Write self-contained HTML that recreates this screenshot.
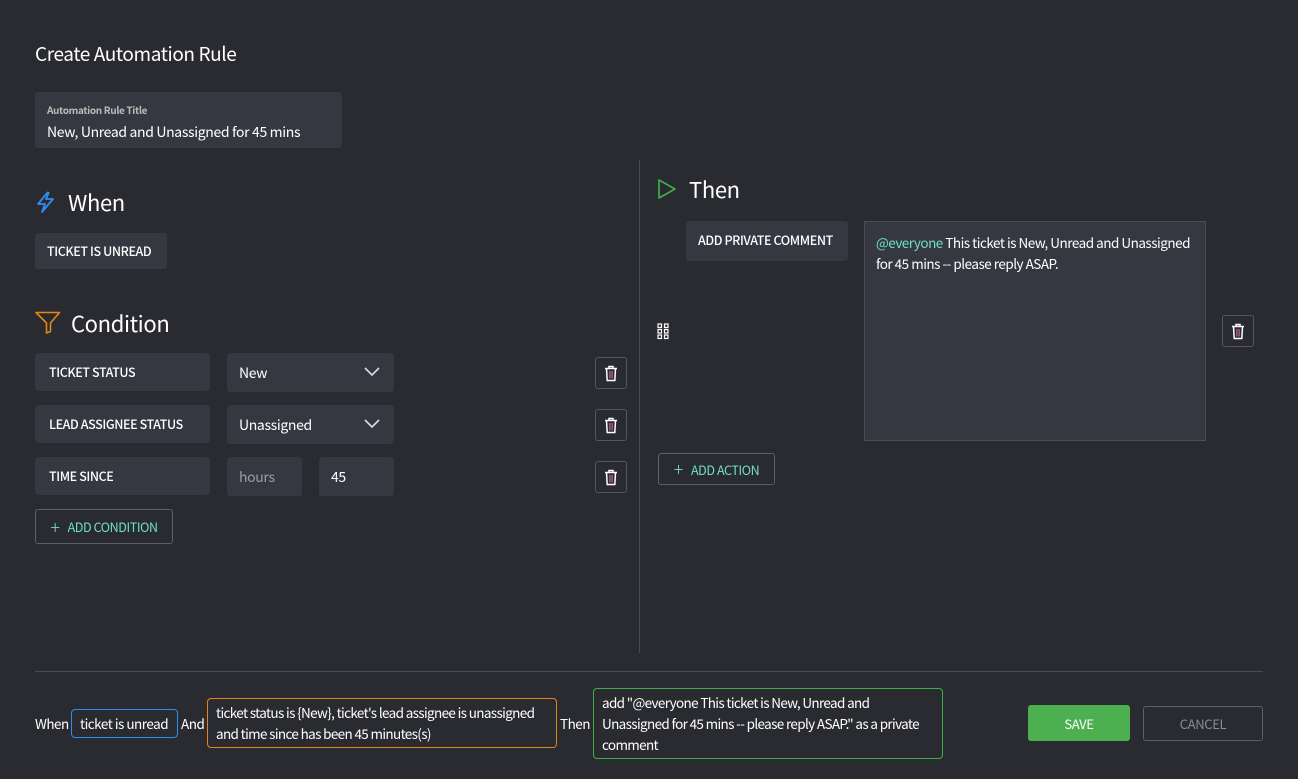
<!DOCTYPE html>
<html><head><meta charset="utf-8"><style>
*{box-sizing:border-box;margin:0;padding:0}
body{width:1298px;height:779px;background:#2a2b30;color:#fff;font-family:"Noto Sans CJK JP","Liberation Sans",sans-serif;position:relative;overflow:hidden;font-size:14px;letter-spacing:-0.35px}
.a{position:absolute}
.box{position:absolute;background:#363841;border-radius:3px}
.lbl{font-size:12.5px;font-weight:500;padding-left:14px;line-height:38px;letter-spacing:-0.4px}
.trash{position:absolute;width:32px;height:32px;border:1px solid #55575e;border-radius:3px;display:flex;align-items:center;justify-content:center}
.btn{position:absolute;border:1px solid #5d5f66;border-radius:3px;color:#6fe0c0;font-size:12.5px;display:flex;align-items:center;justify-content:center;gap:8px;letter-spacing:-0.4px}
.chev{position:absolute;right:14px;top:14px}
.pill{position:absolute;border-radius:4px;font-size:13.5px;line-height:21px;padding:0 8px;display:flex;align-items:center;letter-spacing:-0.5px}
</style></head><body>
<div class="a" style="left:35px;top:40px;font-size:19px;letter-spacing:-0.4px">Create Automation Rule</div>
<div class="box" style="left:35px;top:92px;width:307px;height:56px">
<div class="a" style="left:12px;top:10px;font-size:10px;color:#bbb;font-weight:600">Automation Rule Title</div>
<div class="a" style="left:12px;top:30px;font-size:14px">New, Unread and Unassigned for 45 mins</div></div>

<svg class="a" style="left:35px;top:190px" width="22" height="24" viewBox="0 0 22 24"><path d="M13 2 L3 14 H10 L7 22 L18 9 H11 L14 2" fill="none" stroke="#2f8cf0" stroke-width="1.8" stroke-linejoin="round"/></svg>
<div class="a" style="left:68px;top:186px;font-size:22px">When</div>
<div class="box" style="left:35px;top:233px;width:132px;height:36px"><div class="lbl" style="padding-left:12px;line-height:36px">TICKET IS UNREAD</div></div>

<svg class="a" style="left:35px;top:311px" width="26" height="23" viewBox="0 0 26 23"><path d="M1 1.5 H24.5 L15.5 12 V20.5 L11.5 22 V12 Z" fill="none" stroke="#e38612" stroke-width="1.6" stroke-linejoin="round"/></svg>
<div class="a" style="left:71px;top:307px;font-size:22px">Condition</div>

<div class="box" style="left:35px;top:353px;width:175px;height:38px"><div class="lbl">TICKET STATUS</div></div>
<div class="box" style="left:227px;top:353px;width:167px;height:39px"><div class="a" style="left:12px;top:10px">New</div><svg class="chev" width="16" height="10"><path d="M1 1 L8 8 L15 1" fill="none" stroke="#ddd" stroke-width="1.6"/></svg></div>
<div class="box" style="left:35px;top:405px;width:175px;height:38px"><div class="lbl">LEAD ASSIGNEE STATUS</div></div>
<div class="box" style="left:227px;top:405px;width:167px;height:39px"><div class="a" style="left:12px;top:10px">Unassigned</div><svg class="chev" width="16" height="10"><path d="M1 1 L8 8 L15 1" fill="none" stroke="#ddd" stroke-width="1.6"/></svg></div>
<div class="box" style="left:35px;top:457px;width:175px;height:38px"><div class="lbl">TIME SINCE</div></div>
<div class="box" style="left:227px;top:457px;width:75px;height:39px"><div class="a" style="left:12px;top:10px;color:#9a9ca2">hours</div></div>
<div class="box" style="left:319px;top:457px;width:75px;height:39px"><div class="a" style="left:12px;top:10px">45</div></div>

<div class="trash" style="left:595px;top:357px"><svg width="14" height="17" viewBox="0 0 14 17"><path d="M1 3.5H13M5 3.5V1.5H9V3.5M2.5 3.5L3.2 15.5H10.8L11.5 3.5" fill="none" stroke="#fff" stroke-width="1.5"/><path d="M5.5 6V13.5M8.5 6V13.5" stroke="#c44" stroke-width="1"/><path d="M7 6V13.5" stroke="#58f" stroke-width="1"/></svg></div>
<div class="trash" style="left:595px;top:409px"><svg width="14" height="17" viewBox="0 0 14 17"><path d="M1 3.5H13M5 3.5V1.5H9V3.5M2.5 3.5L3.2 15.5H10.8L11.5 3.5" fill="none" stroke="#fff" stroke-width="1.5"/><path d="M5.5 6V13.5M8.5 6V13.5" stroke="#c44" stroke-width="1"/><path d="M7 6V13.5" stroke="#58f" stroke-width="1"/></svg></div>
<div class="trash" style="left:595px;top:461px"><svg width="14" height="17" viewBox="0 0 14 17"><path d="M1 3.5H13M5 3.5V1.5H9V3.5M2.5 3.5L3.2 15.5H10.8L11.5 3.5" fill="none" stroke="#fff" stroke-width="1.5"/><path d="M5.5 6V13.5M8.5 6V13.5" stroke="#c44" stroke-width="1"/><path d="M7 6V13.5" stroke="#58f" stroke-width="1"/></svg></div>

<div class="btn" style="left:35px;top:509px;width:138px;height:35px"><span style="font-size:18px;font-weight:300">+</span>ADD CONDITION</div>

<div class="a" style="left:639px;top:160px;width:1px;height:493px;background:#4a4c52"></div>

<svg class="a" style="left:657px;top:178px" width="20" height="22" viewBox="0 0 20 22"><path d="M2 2 L18 11 L2 20 Z" fill="none" stroke="#3fae49" stroke-width="1.7" stroke-linejoin="round"/></svg>
<div class="a" style="left:689px;top:173px;font-size:22px">Then</div>
<div class="box" style="left:686px;top:221px;width:162px;height:40px"><div class="lbl" style="padding-left:12px">ADD PRIVATE COMMENT</div></div>
<svg class="a" style="left:657px;top:323px" width="13" height="17"><g fill="none" stroke="#fff" stroke-width="1.2"><rect x="1" y="1" width="3.5" height="3.5"/><rect x="7.5" y="1" width="3.5" height="3.5"/><rect x="1" y="6.5" width="3.5" height="3.5"/><rect x="7.5" y="6.5" width="3.5" height="3.5"/><rect x="1" y="12" width="3.5" height="3.5"/><rect x="7.5" y="12" width="3.5" height="3.5"/></g></svg>
<div class="a" style="left:864px;top:221px;width:342px;height:220px;background:#363841;border:1px solid #4b4d54"><div style="padding:10px 11px;font-size:13.5px;line-height:21px;letter-spacing:-0.5px"><span style="color:#6fe0c0">@everyone</span> This ticket is New, Unread and Unassigned for 45 mins -- please reply ASAP.</div></div>
<div class="trash" style="left:1222px;top:315px"><svg width="14" height="17" viewBox="0 0 14 17"><path d="M1 3.5H13M5 3.5V1.5H9V3.5M2.5 3.5L3.2 15.5H10.8L11.5 3.5" fill="none" stroke="#fff" stroke-width="1.5"/><path d="M5.5 6V13.5M8.5 6V13.5" stroke="#c44" stroke-width="1"/><path d="M7 6V13.5" stroke="#58f" stroke-width="1"/></svg></div>
<div class="btn" style="left:658px;top:453px;width:117px;height:32px"><span style="font-size:18px;font-weight:300">+</span>ADD ACTION</div>

<div class="a" style="left:35px;top:671px;width:1228px;height:1px;background:#4a4c52"></div>

<div class="a" style="left:35px;top:713px;font-size:13.5px;letter-spacing:-0.5px">When</div>
<div class="pill" style="left:71px;top:709px;width:107px;height:29px;border:1px solid #2f8cf0">ticket is unread</div>
<div class="a" style="left:181px;top:713px;font-size:13.5px;letter-spacing:-0.5px">And</div>
<div class="pill" style="left:207px;top:698px;width:350px;height:50px;border:1px solid #e38612;letter-spacing:-0.65px">ticket status is {New}, ticket's lead assignee is unassigned and time since has been 45 minutes(s)</div>
<div class="a" style="left:560px;top:713px;font-size:13.5px;letter-spacing:-0.5px">Then</div>
<div class="pill" style="left:593px;top:688px;width:350px;height:71px;border:1px solid #3fae49;letter-spacing:-0.65px">add "@everyone This ticket is New, Unread and Unassigned for 45 mins -- please reply ASAP." as a private comment</div>

<div class="a" style="left:1028px;top:705px;width:102px;height:36px;background:#4caf50;border-radius:3px;display:flex;align-items:center;justify-content:center;font-size:13px">SAVE</div>
<div class="a" style="left:1143px;top:706px;width:120px;height:35px;border:1px solid #5d5f66;border-radius:3px;display:flex;align-items:center;justify-content:center;font-size:13px;color:#8a8c92">CANCEL</div>
</body></html>
